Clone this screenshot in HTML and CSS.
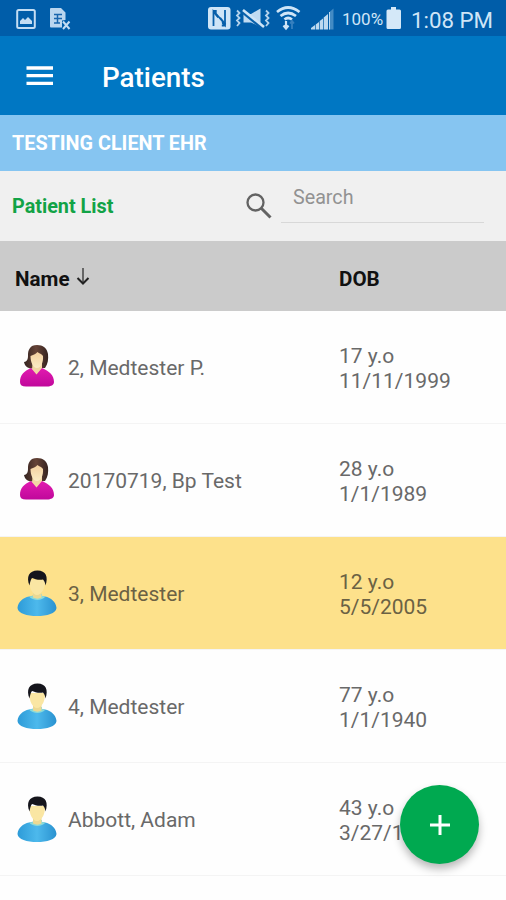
FILE: index.html
```html
<!DOCTYPE html>
<html lang="en">
<head>
<meta charset="utf-8">
<title>Patients</title>
<link rel="stylesheet" href="styles.css">
</head>
<body>
<svg class="defs" width="0" height="0" aria-hidden="true">
  <defs>
    <linearGradient id="pink" x1="0" y1="0" x2="0" y2="1"><stop offset="0" stop-color="#e21bb0"/><stop offset="1" stop-color="#c0089b"/></linearGradient>
    <linearGradient id="blue" x1="0" y1="0" x2="1" y2="0"><stop offset="0" stop-color="#2d9bd8"/><stop offset=".5" stop-color="#4db9ec"/><stop offset="1" stop-color="#2a92d0"/></linearGradient>
    <linearGradient id="hair" x1="0" y1="0" x2="1" y2="0"><stop offset="0" stop-color="#33231f"/><stop offset=".5" stop-color="#654337"/><stop offset="1" stop-color="#35231f"/></linearGradient>
    <linearGradient id="skin" x1="0" y1="0" x2="0" y2="1"><stop offset="0" stop-color="#f3cf9e"/><stop offset="1" stop-color="#fbecc5"/></linearGradient>
    <symbol id="woman" viewBox="0 0 42 50">
      <path d="M21 3C14 3 12 8 12 13C12 17 11.500 19.500 8 20C9 24 11 26 15 26.500L29 26C32 22 32.500 17 32 12C31 6 27 3 21 3Z" fill="url(#hair)"/>
      <path d="M16.500 21H26V29L21 34L16 29Z" fill="#f2d6a4"/>
      <path d="M14.500 14C17 13 19.500 12.500 21.500 10C23 11.500 26 12 27 14C27.500 20 25 26 21 26C17 26 14.500 20 14.500 14Z" fill="url(#skin)"/>
      <path d="M4 40C4 33 8 29 15 26L20.500 32.500L26 26C33 29 38 33 38 40C38 43 35 44.500 31 44.500H10C6 44.500 4 43 4 40Z" fill="url(#pink)"/>
    </symbol>
    <symbol id="man" viewBox="0 0 42 50">
      <path d="M13 28.500C16 27 26 27 29 28.500C35 29.500 40 34 40.500 40C40 45.500 31 48 21 48S2 45.500 1.500 40C2 34 7 29.500 13 28.500Z" fill="url(#blue)"/>
      <path d="M17 26H26V28L29.500 28.500C26 33 17 33 13 28.500L17 28Z" fill="#8bdad9"/>
      <path d="M17 22H25.500V29.500C23 31 20 31 17 29.500Z" fill="#ecd993"/>
      <path d="M13.500 12H29C29.500 20 25.500 27 21 27S13 20 13.500 12Z" fill="#fae6a3"/>
      <path d="M13.500 17.500C10 9 13 2.500 21.500 2.500C30 2.500 32.500 9 29.500 17.500C29 14.500 28.500 13 27 11.500C23 12.500 18.500 11 16 10C14.500 12 14 14.500 13.500 17.500Z" fill="#15151c"/>
    </symbol>
  </defs>
</svg>
<div class="screen">
  <header class="status">
    <svg class="status-left" width="80" height="36" viewBox="0 0 80 36">
      <rect x="17.200" y="10" width="17.600" height="18" rx="1.500" fill="none" stroke="#c3ddf3" stroke-width="2"/>
      <path d="M20 24V21L23 18L25 20L28 17L32 21V24Z" fill="#c3ddf3"/>
      <path d="M50 9Q50 8 51 8H61L65.500 12.500V20L62 20.500V27.500H51Q50 27.500 50 26.500Z" fill="#b9d6ef"/>
      <path d="M54 14.500H62M54 18.500H62M54 23H60M57.500 14.500V23" stroke="#1765ad" stroke-width="1.500"/>
      <path d="M63 21.500L69.500 29M69.500 21.500L63 29" stroke="#c3ddf3" stroke-width="2"/>
    </svg>
    <div class="status-right">
      <svg width="129" height="36" viewBox="207 0 129 36">
        <rect x="208" y="7" width="22.500" height="22.500" rx="3" fill="#cfe5f7"/>
        <path d="M213.500 26V11.500L225 25V10M213.500 11L217 11M221 25.500H225" fill="none" stroke="#0860aa" stroke-width="1.800"/>
        <path d="M214 11L225 25" stroke="#0860aa" stroke-width="3"/>
        <path d="M217.500 8V13L221 17M221 28V22L217.500 18" fill="none" stroke="#cfe5f7" stroke-width="1.600"/>
        <path d="M237 10.500L239.500 13L237 15.500L239.500 18L237 20.500L239.500 23L237 26M266 10.500L268.500 13L266 15.500L268.500 18L266 20.500L268.500 23L266 26" fill="none" stroke="#b2d1eb" stroke-width="1.800"/>
        <path d="M243.500 14H251L260.500 8.500V27L251 22.500H243.500Z" fill="#c0dbf2"/>
        <path d="M242 11L264 29" stroke="#0860aa" stroke-width="4"/>
        <path d="M243 10L264 27" stroke="#cfe5f7" stroke-width="2.600"/>
        <g fill="none" stroke="#cfe5f7" stroke-width="2.700"><path d="M277 12Q288 3 299.500 12"/><path d="M280.500 16Q288 10 296 16"/><path d="M284.500 19.500Q288 16.500 292 19.500"/></g>
        <path d="M286 21V27M283.500 25.500L286 28.500L288.500 25.500" fill="none" stroke="#cfe5f7" stroke-width="2.200"/>
        <path d="M292 29V22M290 23.500L292 21L294 23.500" fill="none" stroke="#367fbe" stroke-width="1.800"/>
        <path d="M311 29.500V28L315 25V29.500ZM315.700 29.500V24.500L319 22V29.500ZM319.700 29.500V21L323 18.500V29.500ZM323.700 29.500V17.500L328 14V29.500Z" fill="#bdd9f0"/>
        <path d="M329 29.500V12.500L333.500 8.500V29.500Z" fill="#438bc4"/>
        <path d="M329.500 29.500V12" stroke="#bdd9f0"/>
      </svg>
      <span class="percent">100%</span>
      <svg class="battery" width="16" height="24" viewBox="0 0 16 24"><path d="M5 1H10V3.500H13.500Q15 3.500 15 5V21.500Q15 23 13.500 23H2Q.5 23 .5 21.500V5Q.5 3.500 2 3.500H5Z" fill="#d4e8f8"/></svg>
      <span class="clock">1:08 PM</span>
    </div>
  </header>
  <nav class="appbar">
    <svg width="28" height="20" viewBox="0 0 28 20"><path d="M.5 2H27M.5 9.700H27M.5 17.400H27" stroke="#fff" stroke-width="3.300"/></svg>
    <h1>Patients</h1>
  </nav>
  <div class="client">TESTING CLIENT EHR</div>
  <div class="toolbar">
    <span class="list-title">Patient List</span>
    <svg class="search-icon" width="28" height="28" viewBox="0 0 28 28"><circle cx="10.500" cy="10.500" r="8" fill="none" stroke="#636363" stroke-width="2.300"/><path d="M16 16L25.500 25.500" stroke="#636363" stroke-width="3"/></svg>
    <div class="search">Search</div>
  </div>
  <div class="columns">
    <span class="name-col">Name<svg width="14" height="19" viewBox="0 0 14 19"><path d="M7 1V16" stroke="#666" stroke-width="2"/><path d="M1.500 11L7 16.500L12.500 11" fill="none" stroke="#222" stroke-width="2"/></svg></span>
    <span class="dob-col">DOB</span>
  </div>
  <main>
    <div class="row"><svg class="avatar"><use href="#woman"/></svg><span class="name">2, Medtester P.</span><div class="dob">17 y.o<br>11/11/1999</div></div>
    <div class="row"><svg class="avatar"><use href="#woman"/></svg><span class="name">20170719, Bp Test</span><div class="dob">28 y.o<br>1/1/1989</div></div>
    <div class="row selected"><svg class="avatar"><use href="#man"/></svg><span class="name">3, Medtester</span><div class="dob">12 y.o<br>5/5/2005</div></div>
    <div class="row"><svg class="avatar"><use href="#man"/></svg><span class="name">4, Medtester</span><div class="dob">77 y.o<br>1/1/1940</div></div>
    <div class="row"><svg class="avatar"><use href="#man"/></svg><span class="name">Abbott, Adam</span><div class="dob">43 y.o<br>3/27/1974</div></div>
  </main>
  <button class="fab" aria-label="Add patient"><svg width="22" height="22" viewBox="0 0 22 22"><path d="M11 1V21M1 11H21" stroke="#fff" stroke-width="3"/></svg></button>
</div>
</body>
</html>
```
FILE: styles.css
```css
* { box-sizing: border-box; }
body { margin: 0; font-family: Roboto, sans-serif; background: #fefefe; }
svg { display: block; flex: none; }
.defs { position: absolute; }
.screen { position: relative; width: 506px; height: 900px; overflow: hidden; }
.status { height: 36px; background: #005da9; display: flex; justify-content: space-between; color: #cfe5f7; }
.status-right { display: flex; align-items: center; width: 299px; }
.percent { width: 48px; padding: 2px 0 0 6px; font-size: 17px; line-height: 20px; white-space: nowrap; }
.battery { margin-left: 2px; }
.clock { margin: 3px 0 0 9px; font-size: 22.3px; line-height: 26px; white-space: nowrap; }
.appbar { height: 79px; background: #0077c3; color: #fff; display: flex; align-items: center; padding: 2px 26px 0; gap: 48px; }
.appbar svg { margin-top: -2px; }
h1 { margin: 2px 0 0; font-size: 27.8px; font-weight: 500; line-height: 32px; }
.client { height: 56px; background: #86c5f1; color: #fff; font-size: 19.8px; font-weight: 700; line-height: 57px; padding-left: 12px; }
.toolbar { height: 70px; background: #f0f0f0; display: flex; align-items: flex-start; }
.list-title { width: 245px; padding-left: 12px; color: #12a346; font-size: 19.8px; font-weight: 700; line-height: 71px; }
.search-icon { margin-top: 21px; }
.search { width: 203px; height: 52px; margin-left: 8px; padding-left: 12px; border-bottom: 1px solid #d8d8d8; color: #929292; font-size: 19.7px; line-height: 54px; }
.columns { height: 70px; background: #cbcbcb; display: flex; align-items: center; padding: 5px 0 0 15px; font-size: 20.6px; font-weight: 700; color: #111; }
.name-col { width: 324px; display: flex; align-items: center; gap: 6px; }
.name-col svg { margin-top: -4px; }
.row { height: 113px; border-bottom: 1px solid #f4f4f4; display: flex; align-items: center; color: #696969; font-size: 21px; }
.selected { background: #fde18b; color: #6b6144; }
.avatar { width: 42px; height: 50px; margin: -1px 0 0 16px; }
.name { width: 271px; margin-left: 10px; padding-top: 2px; }
.dob { line-height: 25px; padding-top: 3px; white-space: nowrap; }
.fab { position: absolute; left: 400px; top: 785px; width: 79px; height: 79px; border: 0; border-radius: 50%; background: #00a950; box-shadow: 0 5px 8px rgba(0,0,0,.28); display: flex; align-items: center; justify-content: center; padding: 0; }
```
